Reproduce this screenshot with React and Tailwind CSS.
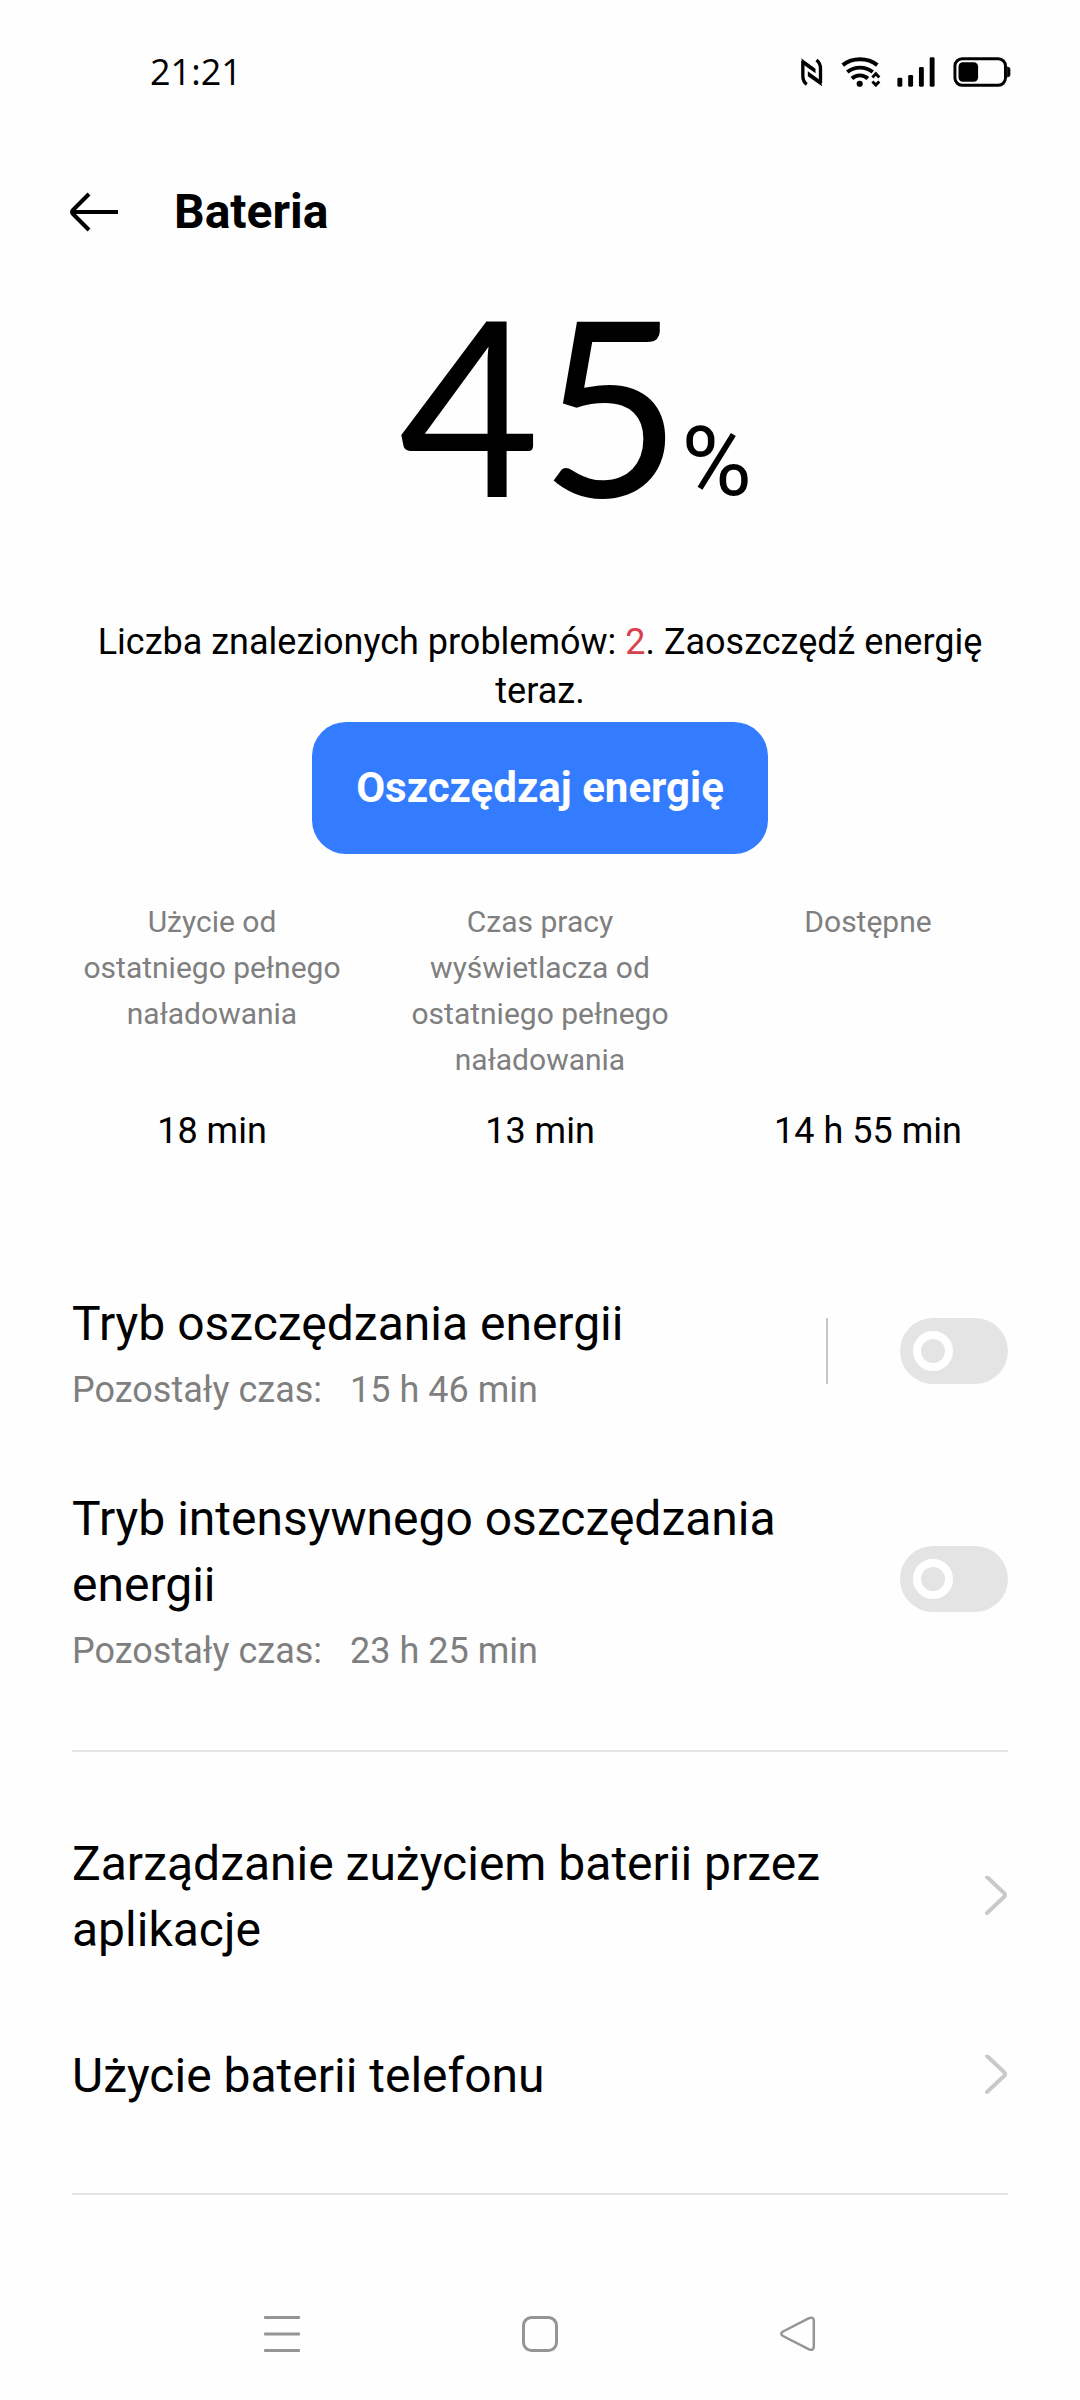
import { useState } from "react";

function NfcIcon() {
  return (
    <svg viewBox="117 84 68 84" className="h-7 w-[23px]" fill="none" stroke="#000" strokeWidth="10" aria-hidden="true">
      <path d="M137 163 C128 157 125 149 125 138 V93" />
      <path d="M166 90 C175 97 178 105 178 116 V160" />
      <path d="M120 85 L163 116 V130 L124 102 Z M183 169 L140 139 V124 L179 152 Z" fill="#000" stroke="none" />
    </svg>
  );
}

function WifiIcon() {
  return (
    <svg viewBox="244 80 120 92" className="h-[30px] w-10" fill="none" stroke="#000" strokeWidth="12" aria-hidden="true">
      <path d="M248 105 C278 81 324 81 354 105" />
      <path d="M262 126 C285 108 317 108 340 126" />
      <path d="M276 146 C290 133 311 133 325 146" />
      <circle cx="300" cy="162" r="9.500" fill="#000" stroke="none" />
      <path d="M339 143 L349.500 131 L360 143 M339 155 L349.500 166 L360 155" strokeWidth="9" />
    </svg>
  );
}

function SignalIcon() {
  return (
    <svg viewBox="410 80 116 92" className="h-[30px] w-[38px]" aria-hidden="true">
      <rect x="411" y="144" width="15" height="27" rx="4" />
      <rect x="444" y="135" width="15" height="36" rx="4" />
      <rect x="477" y="111" width="15" height="60" rx="4" />
      <rect x="510" y="81" width="15" height="90" rx="4" />
    </svg>
  );
}

function BatteryIcon() {
  return (
    <svg viewBox="578 80 176 92" className="h-[30px] w-[58px]" aria-hidden="true">
      <rect x="583" y="85.500" width="155" height="81" rx="22" fill="none" stroke="#000" strokeWidth="9" />
      <rect x="594" y="96" width="60" height="60" rx="13" />
      <path d="M743 109 Q753 111 753 118 V134 Q753 141 743 143 Z" />
    </svg>
  );
}

function Chevron() {
  return (
    <svg viewBox="0 0 24 42" className="h-[42px] w-6 shrink-0" fill="none" stroke="#c9c9c9" strokeWidth="4" strokeLinecap="round" strokeLinejoin="round" aria-hidden="true">
      <path d="M3 1 L20 17 Q22 19 20 21 L3 37" />
    </svg>
  );
}

function Stat({ label, value }) {
  return (
    <div className="flex flex-col px-8 text-center">
      <dt className="flex-1 text-[30px] leading-[46px] text-[#7f7f7f]">{label}</dt>
      <dd className="-mx-8 mt-6 text-[36px] leading-[48px]">{value}</dd>
    </div>
  );
}

function ModeRow({ id, title, time, divided }) {
  const [on, setOn] = useState(false);
  return (
    <div className="flex items-center">
      <label htmlFor={id} className="flex-1 pr-16">
        <span className="block text-[48px] leading-[66px]">{title}</span>
        <span className="mt-3 flex gap-7 text-[36px] leading-[42px] text-[#7f7f7f]">
          <span>Pozostały czas:</span>
          <span>{time}</span>
        </span>
      </label>
      {divided && <div className="mr-[72px] h-[66px] w-[2px] bg-[#c7c7c7]" />}
      <input
        id={id}
        type="checkbox"
        role="switch"
        checked={on}
        onChange={(e) => setOn(e.target.checked)}
        className="flex h-[66px] w-[108px] shrink-0 appearance-none items-center rounded-full bg-[#e4e4e4] px-[13px] before:h-10 before:w-10 before:rounded-full before:border-8 before:border-white before:content-[''] checked:justify-end checked:bg-[#347cff]"
      />
    </div>
  );
}

function LinkRow({ children }) {
  return (
    <a href="#" className="flex items-center justify-between gap-16">
      <span className="max-w-[800px] text-[48px] leading-[66px]">{children}</span>
      <Chevron />
    </a>
  );
}

export default function App() {
  return (
    <div className="flex min-h-screen flex-col bg-[#fefefe] font-['Roboto',sans-serif] text-black">
      <div className="flex h-36 items-center justify-between pr-[69px] pl-[150px]">
        <time className="font-['Open_Sans',sans-serif] text-[36px] leading-[48px]">21:21</time>
        <div className="flex items-center">
          <NfcIcon />
          <div className="w-[18px]" />
          <WifiIcon />
          <div className="w-4" />
          <SignalIcon />
          <div className="w-[18px]" />
          <BatteryIcon />
        </div>
      </div>

      <header className="flex h-[136px] items-center gap-[55px] pl-[69px]">
        <button type="button" aria-label="Wstecz">
          <svg viewBox="0 0 50 40" className="h-10 w-[50px]" fill="none" stroke="#000" strokeWidth="4" aria-hidden="true">
            <path d="M49 20 H4 M20 2 L4 18 Q2 20 4 22 L20 38" />
          </svg>
        </button>
        <h1 className="text-[48px] leading-[66px] font-bold">Bateria</h1>
      </header>

      <main className="flex-1">
        <div className="grid grid-cols-[1fr_auto_1fr] items-end">
          <div />
          <div className="font-['Lato',sans-serif] text-[244px] leading-[246px]">45</div>
          <div className="pb-1 text-[96px] leading-[120px]">%</div>
        </div>

        <section className="flex flex-col items-center px-[72px] pt-[92px]">
          <p className="text-center text-[36px] leading-[49px]">
            Liczba znalezionych problemów: <span className="text-[#d9404f]">2</span>. Zaoszczędź energię teraz.
          </p>
          <button type="button" className="mt-[6px] h-[132px] rounded-[34px] bg-[#347cff] px-11 text-[42px] leading-[50px] font-bold text-white">
            Oszczędzaj energię
          </button>
        </section>

        <dl className="grid grid-cols-3 px-12 pt-[45px]">
          <Stat label="Użycie od ostatniego pełnego naładowania" value="18 min" />
          <Stat label="Czas pracy wyświetlacza od ostatniego pełnego naładowania" value="13 min" />
          <Stat label="Dostępne" value="14 h 55 min" />
        </dl>

        <div className="px-[72px] pt-[136px]">
          <section className="flex flex-col gap-[75px] border-b-2 border-[#e4e4e4] pb-[78px]">
            <ModeRow id="saver" title="Tryb oszczędzania energii" time="15 h 46 min" divided />
            <ModeRow id="super-saver" title="Tryb intensywnego oszczędzania energii" time="23 h 25 min" />
          </section>
          <section className="flex flex-col gap-20 border-b-2 border-[#e4e4e4] pt-[79px] pb-[84px]">
            <LinkRow>Zarządzanie zużyciem baterii przez aplikacje</LinkRow>
            <LinkRow>Użycie baterii telefonu</LinkRow>
          </section>
        </div>
      </main>

      <nav className="grid h-[132px] grid-cols-3 px-[153px]">
        <button type="button" aria-label="Ostatnie aplikacje" className="flex items-center justify-center">
          <svg viewBox="0 0 36 36" className="h-9 w-9" fill="#959595" aria-hidden="true">
            <rect width="36" height="3" rx="1" />
            <rect y="16.500" width="36" height="3" rx="1" />
            <rect y="33" width="36" height="3" rx="1" />
          </svg>
        </button>
        <button type="button" aria-label="Ekran główny" className="flex items-center justify-center">
          <svg viewBox="0 0 36 36" className="h-9 w-9" fill="none" stroke="#959595" strokeWidth="3" aria-hidden="true">
            <rect x="1.500" y="1.500" width="33" height="33" rx="8" />
          </svg>
        </button>
        <button type="button" aria-label="Cofnij" className="flex items-center justify-center">
          <svg viewBox="0 0 36 36" className="h-9 w-9" fill="none" stroke="#959595" strokeWidth="2.500" aria-hidden="true">
            <path d="M3 15.500 L29 2.200 Q33.500 0.500 33.800 4 V31 Q33.500 35 29 33.300 L3 20 Q-0.500 17.700 3 15.500 Z" />
          </svg>
        </button>
      </nav>
    </div>
  );
}
